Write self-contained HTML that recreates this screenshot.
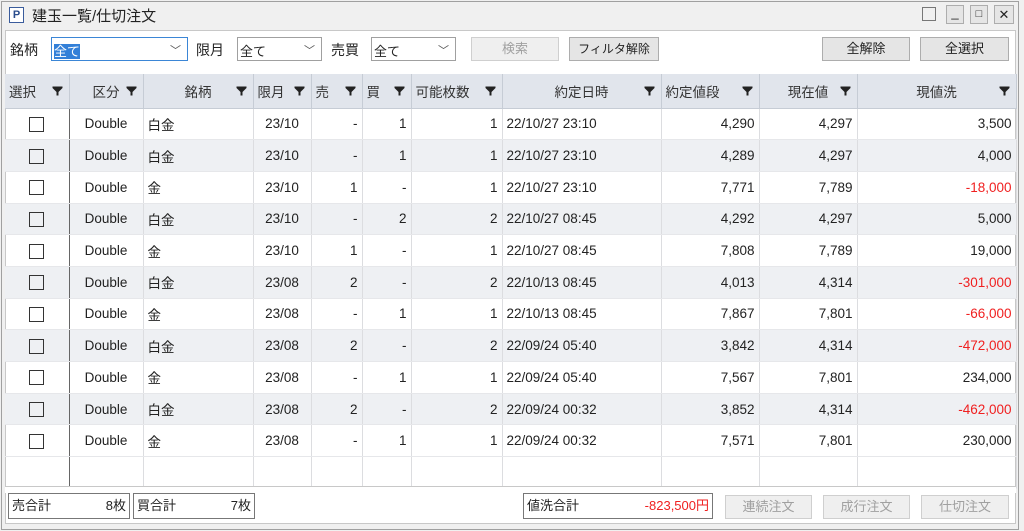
<!DOCTYPE html><html><head><meta charset="utf-8"><style>
*{box-sizing:border-box;margin:0;padding:0}
body{width:1024px;height:531px;background:#f0f0f0;font-family:"Liberation Sans","Noto Sans CJK JP",sans-serif;font-size:13px;color:#222;position:relative;overflow:hidden}
.a{position:absolute}
.win{left:1px;top:1px;width:1018px;height:529px;border:1px solid #a0a0a0;background:#f0f0f0}
.panel{left:5px;top:30px;width:1011px;height:494px;background:#fff;border:1px solid #c8c8c8}
.sel{border:1px solid #a0a0a0;background:#fff;height:24px;font-size:13px;padding:3px 2px}
.btn{border:1px solid #adadad;background:#e5e5e5;height:24px;text-align:center;font-size:13px;line-height:22px}
.dis{color:#a0a0a0;border-color:#cfcfcf;background:#efefef}
.chev{position:absolute;right:6px;top:4px;font-size:11px;color:#555}
table{border-collapse:collapse;position:absolute;left:5px;top:74px;table-layout:fixed}
td,th{border-right:1px solid #dcdde0;height:31.7px;font-size:13.5px;white-space:nowrap;overflow:hidden;padding:0 4px}
th{background:#e1e5ec;font-weight:normal;height:34px;border-right:1px solid #c6ccd5;border-bottom:1px solid #c6ccd5;position:relative;color:#333}
th svg{position:absolute;right:6px;top:12px}
tr.s td{background:#eef0f3}
td{border-bottom:1px solid #e6e7ea}
.r{text-align:right}.c{text-align:center}
.red{color:#f02020}
.cb{display:inline-block;width:15px;height:15px;border:1px solid #333;vertical-align:middle}
.sum{border:1px solid #777;height:26px;top:493px;font-size:13px;line-height:24px;padding:0 3px;background:#fff}
</style></head><body>
<svg width="0" height="0" style="position:absolute"><defs><symbol id="f" viewBox="0 0 11 10"><path d="M0.5 0.5H10.5V2L6.5 6V9.5H4.5V6L0.5 2Z" fill="#222"/></symbol></defs></svg>
<div class="a win"></div>
<div class="a" style="left:9px;top:7px;width:15px;height:16px;border:1px solid #3a5c9c;background:#fff;font-size:11px;font-weight:bold;color:#2a4c8c;text-align:center;line-height:14px">P</div>
<div class="a" style="left:32px;top:5px;font-size:15px">建玉一覧/仕切注文</div>
<div class="a" style="left:922px;top:7px;width:14px;height:14px;border:1px solid #777"></div>
<div class="a btn" style="left:946px;top:5px;width:18px;height:19px;line-height:14px">_</div>
<div class="a btn" style="left:970px;top:5px;width:18px;height:19px;line-height:16px;font-size:11px">□</div>
<div class="a btn" style="left:994px;top:5px;width:20px;height:19px;line-height:17px">✕</div>
<div class="a panel"></div>
<div class="a" style="left:10px;top:40px;font-size:14px">銘柄</div>
<div class="a sel" style="left:51px;top:37px;width:137px;border-color:#3b86d6"><span style="background:#3380d8;color:#fff">全て</span><span class="chev">﹀</span></div>
<div class="a" style="left:196px;top:40px;font-size:14px">限月</div>
<div class="a sel" style="left:237px;top:37px;width:85px">全て<span class="chev">﹀</span></div>
<div class="a" style="left:331px;top:40px;font-size:14px">売買</div>
<div class="a sel" style="left:371px;top:37px;width:85px">全て<span class="chev">﹀</span></div>
<div class="a btn dis" style="left:471px;top:37px;width:88px">検索</div>
<div class="a btn" style="left:569px;top:37px;width:90px;font-size:12px">フィルタ解除</div>
<div class="a btn" style="left:822px;top:37px;width:88px">全解除</div>
<div class="a btn" style="left:920px;top:37px;width:89px">全選択</div>
<table>
<colgroup><col style="width:64px"><col style="width:74px"><col style="width:110px"><col style="width:58px"><col style="width:51px"><col style="width:49px"><col style="width:91px"><col style="width:159px"><col style="width:98px"><col style="width:98px"><col style="width:159px"></colgroup>
<tr><th style="text-align:left">選択<svg width="11" height="10"><use href="#f"/></svg></th><th>区分<svg width="11" height="10"><use href="#f"/></svg></th><th>銘柄<svg width="11" height="10"><use href="#f"/></svg></th><th style="text-align:left">限月<svg width="11" height="10"><use href="#f"/></svg></th><th style="text-align:left">売<svg width="11" height="10"><use href="#f"/></svg></th><th style="text-align:left">買<svg width="11" height="10"><use href="#f"/></svg></th><th style="text-align:left">可能枚数<svg width="11" height="10"><use href="#f"/></svg></th><th>約定日時<svg width="11" height="10"><use href="#f"/></svg></th><th style="text-align:left">約定値段<svg width="11" height="10"><use href="#f"/></svg></th><th>現在値<svg width="11" height="10"><use href="#f"/></svg></th><th>現値洗<svg width="11" height="10"><use href="#f"/></svg></th></tr>
<tr><td class="c" style="border-right:1px solid #666"><span class="cb"></span></td><td class="c">Double</td><td>白金</td><td class="c">23/10</td><td class="r">-</td><td class="r">1</td><td class="r">1</td><td>22/10/27 23:10</td><td class="r">4,290</td><td class="r">4,297</td><td class="r">3,500</td></tr>
<tr class="s"><td class="c" style="border-right:1px solid #666"><span class="cb"></span></td><td class="c">Double</td><td>白金</td><td class="c">23/10</td><td class="r">-</td><td class="r">1</td><td class="r">1</td><td>22/10/27 23:10</td><td class="r">4,289</td><td class="r">4,297</td><td class="r">4,000</td></tr>
<tr><td class="c" style="border-right:1px solid #666"><span class="cb"></span></td><td class="c">Double</td><td>金</td><td class="c">23/10</td><td class="r">1</td><td class="r">-</td><td class="r">1</td><td>22/10/27 23:10</td><td class="r">7,771</td><td class="r">7,789</td><td class="r red">-18,000</td></tr>
<tr class="s"><td class="c" style="border-right:1px solid #666"><span class="cb"></span></td><td class="c">Double</td><td>白金</td><td class="c">23/10</td><td class="r">-</td><td class="r">2</td><td class="r">2</td><td>22/10/27 08:45</td><td class="r">4,292</td><td class="r">4,297</td><td class="r">5,000</td></tr>
<tr><td class="c" style="border-right:1px solid #666"><span class="cb"></span></td><td class="c">Double</td><td>金</td><td class="c">23/10</td><td class="r">1</td><td class="r">-</td><td class="r">1</td><td>22/10/27 08:45</td><td class="r">7,808</td><td class="r">7,789</td><td class="r">19,000</td></tr>
<tr class="s"><td class="c" style="border-right:1px solid #666"><span class="cb"></span></td><td class="c">Double</td><td>白金</td><td class="c">23/08</td><td class="r">2</td><td class="r">-</td><td class="r">2</td><td>22/10/13 08:45</td><td class="r">4,013</td><td class="r">4,314</td><td class="r red">-301,000</td></tr>
<tr><td class="c" style="border-right:1px solid #666"><span class="cb"></span></td><td class="c">Double</td><td>金</td><td class="c">23/08</td><td class="r">-</td><td class="r">1</td><td class="r">1</td><td>22/10/13 08:45</td><td class="r">7,867</td><td class="r">7,801</td><td class="r red">-66,000</td></tr>
<tr class="s"><td class="c" style="border-right:1px solid #666"><span class="cb"></span></td><td class="c">Double</td><td>白金</td><td class="c">23/08</td><td class="r">2</td><td class="r">-</td><td class="r">2</td><td>22/09/24 05:40</td><td class="r">3,842</td><td class="r">4,314</td><td class="r red">-472,000</td></tr>
<tr><td class="c" style="border-right:1px solid #666"><span class="cb"></span></td><td class="c">Double</td><td>金</td><td class="c">23/08</td><td class="r">-</td><td class="r">1</td><td class="r">1</td><td>22/09/24 05:40</td><td class="r">7,567</td><td class="r">7,801</td><td class="r">234,000</td></tr>
<tr class="s"><td class="c" style="border-right:1px solid #666"><span class="cb"></span></td><td class="c">Double</td><td>白金</td><td class="c">23/08</td><td class="r">2</td><td class="r">-</td><td class="r">2</td><td>22/09/24 00:32</td><td class="r">3,852</td><td class="r">4,314</td><td class="r red">-462,000</td></tr>
<tr><td class="c" style="border-right:1px solid #666"><span class="cb"></span></td><td class="c">Double</td><td>金</td><td class="c">23/08</td><td class="r">-</td><td class="r">1</td><td class="r">1</td><td>22/09/24 00:32</td><td class="r">7,571</td><td class="r">7,801</td><td class="r">230,000</td></tr>
<tr><td style="height:30px;border-right:1px solid #666"></td><td></td><td></td><td></td><td></td><td></td><td></td><td></td><td></td><td></td><td></td></tr>
</table>
<div class="a" style="left:5px;top:486px;width:1011px;height:7px;background:#fff;border-top:1px solid #c8c8c8"></div>
<div class="a sum" style="left:8px;width:122px">売合計<span style="float:right">8枚</span></div>
<div class="a sum" style="left:133px;width:122px">買合計<span style="float:right">7枚</span></div>
<div class="a sum" style="left:523px;width:190px">値洗合計<span style="float:right" class="red">-823,500円</span></div>
<div class="a btn dis" style="left:725px;top:495px;width:87px">連続注文</div>
<div class="a btn dis" style="left:823px;top:495px;width:87px">成行注文</div>
<div class="a btn dis" style="left:921px;top:495px;width:88px">仕切注文</div>
</body></html>
